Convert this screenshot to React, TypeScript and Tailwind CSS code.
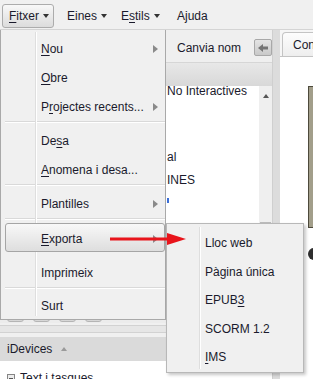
import React from 'react'

const Key = ({ children }: { children: React.ReactNode }) => (
  <span className="underline underline-offset-[2px]">{children}</span>
)

const Caret = () => (
  <span className="ml-[4px] inline-block h-0 w-0 border-x-[3.5px] border-t-[4px] border-x-transparent border-t-[#333]" />
)

const SubArrow = () => (
  <span className="ml-auto inline-block h-0 w-0 border-y-[4.5px] border-l-[5px] border-y-transparent border-l-[#8a8a8a]" />
)

const Sep = () => (
  <div className="ml-[4px] h-[5px] border-t border-[#d9d9d9]">
    <div className="h-px bg-white" />
  </div>
)

function Item({ children, sub, h = 'h-[29px]' }: { children: React.ReactNode; sub?: boolean; h?: string }) {
  return (
    <div className={`flex ${h} items-center pl-[40px] pr-[7px]`}>
      <span>{children}</span>
      {sub && <SubArrow />}
    </div>
  )
}

function FileMenu() {
  return (
    <div className="absolute left-0 top-[30px] h-[290px] w-[166px] border-x border-b border-[#a9a9a9] bg-[#f0f0f0] pt-[4px]">
      <div className="absolute bottom-[3px] left-[34px] top-[2px] w-[2px] border-l border-[#dedede] bg-white" />
      <Item sub>
        <Key>N</Key>ou
      </Item>
      <Item>
        <Key>O</Key>bre
      </Item>
      <Item sub>
        P<Key>r</Key>ojectes recents...
      </Item>
      <Sep />
      <Item>
        De<Key>s</Key>a
      </Item>
      <Item>
        <Key>A</Key>nomena i desa...
      </Item>
      <Sep />
      <Item sub>Plantilles</Item>
      <Sep />
      <div className="relative mb-[6px] ml-[4px] flex h-[29px] items-center rounded-[3px] border border-[#a5a5a5] bg-gradient-to-b from-[#f8f8f8] to-[#dedede] pl-[35px] pr-[6px] pt-[3px]">
        <span>
          <Key>E</Key>xporta
        </span>
        <SubArrow />
      </div>
      <Item>Imprimeix</Item>
      <Sep />
      <Item h="h-[27px]">Surt</Item>
    </div>
  )
}

function ExportMenu() {
  const rows: React.ReactNode[] = [
    'Lloc web',
    'Pàgina única',
    <>
      EPUB<Key>3</Key>
    </>,
    'SCORM 1.2',
    <>
      <Key>I</Key>MS
    </>
  ]
  return (
    <div className="absolute left-[166px] top-[223px] w-[138px] border border-[#b8b8b8] bg-[#f0f0f0] pt-[5px] shadow-[2px_2px_3px_rgba(0,0,0,0.22)]">
      <div className="absolute bottom-[3px] left-[32px] top-[3px] w-[2px] border-l border-[#dedede] bg-white" />
      {rows.map((r, i) => (
        <div key={i} className="flex h-[28.5px] items-center pl-[38px]">
          {r}
        </div>
      ))}
    </div>
  )
}

export default function App() {
  return (
    <div className="relative h-[379px] w-[313px] overflow-hidden bg-[#f0f0f0] font-['Liberation_Sans',Arial,sans-serif] text-[12px] leading-[14px] text-[#1a1a2c]">
      {/* menu bar */}
      <div className="flex h-[30px] items-start border-b border-[#d4d4d4] pl-[2px] pt-[4px]">
        <div className="flex h-[24px] w-[52px] items-center rounded-[3px] border border-[#acacac] bg-gradient-to-b from-[#f8f8f8] to-[#dcdcdc] pl-[6px]">
          <Key>F</Key>itxer
          <Caret />
        </div>
        <div className="ml-[6px] flex h-[24px] w-[48px] items-center pl-[7px]">
          Eines
          <Caret />
        </div>
        <div className="ml-[6px] flex h-[24px] w-[50px] items-center pl-[7px]">
          E<Key>s</Key>tils
          <Caret />
        </div>
        <div className="ml-[6px] flex h-[24px] items-center pl-[7px]">Ajuda</div>
      </div>

      <div className="flex h-[349px]">
        {/* left panel */}
        <div className="flex w-[273px] flex-col border-r border-[#cfcfcf]">
          <div className="flex h-[32px] shrink-0 items-center justify-end bg-[#efefef] pt-[3px]">
            <span className="mr-[13px]">Canvia nom</span>
            <div className="flex h-[17px] w-[18px] items-center justify-center rounded-[2px] border border-[#a8a8a8] bg-gradient-to-b from-[#e4e4e4] to-[#c9c9c9]">
              <svg width="10" height="8" viewBox="0 0 10 8">
                <path d="M0 4 L5 0 L5 2.5 L10 2.5 L10 5.5 L5 5.5 L5 8 Z" fill="#747474" />
              </svg>
            </div>
          </div>
          <div className="h-[24px] shrink-0 border-t border-[#d6d6d6] bg-gradient-to-b from-[#e8e8e8] to-[#d8d8d8]" />
          <div className="flex h-[214px] shrink-0">
            <div className="flex-1 overflow-hidden whitespace-nowrap bg-white pl-[167px]">
              <div className="h-[10px] leading-[10px]">No Interactives</div>
              <div className="mt-[54px] h-[14px]">al</div>
              <div className="mt-[9px] h-[14px]">INES</div>
              <div className="mt-[11px] h-[5px] w-[2px] bg-[#3b6fd8]" />
            </div>
            <div className="flex w-[13px] flex-col items-center bg-[#efefef]">
              <span className="mt-[8px] h-0 w-0 border-x-[3px] border-b-[4px] border-x-transparent border-b-[#555]" />
              <div className="mt-[124px] h-[70px] w-[11px] border-t border-[#bdbdbd] bg-[#dcdcdc]" />
            </div>
          </div>
          <div className="flex h-[23px] shrink-0 gap-[9px] bg-[#ececec] pl-[7px] pt-[2px]">
            {[0, 1, 2, 3].map((i) => (
              <div key={i} className="h-[20px] w-[17px] rounded-[3px] border border-[#b5b5b5] bg-gradient-to-b from-[#f4f4f4] to-[#d6d6d6]" />
            ))}
          </div>
          <div className="h-[14px] shrink-0 bg-[#f0f0f0] pt-[2px]">
            <div className="h-[8px] border-y border-[#d2d2d2] bg-[#e6e6e6]" />
          </div>
          <div className="flex h-[24px] shrink-0 items-center bg-[#dadada] pl-[7px]">
            iDevices
            <span className="ml-[9px] h-0 w-0 border-x-[3.5px] border-b-[4px] border-x-transparent border-b-[#9a9a9a]" />
          </div>
          <div className="min-h-0 flex-1 overflow-hidden bg-white pl-[7px] pt-[10px]">
            <div className="flex items-center gap-[5px]">
              <span className="flex h-[8px] w-[8px] items-center justify-center border border-[#858585] bg-[#ececec]">
                <span className="h-px w-[4px] bg-[#555]" />
              </span>
              Text i tasques
            </div>
          </div>
        </div>
        <div className="w-[7px] bg-[#dcdcdc]" />

        {/* content area */}
        <div className="flex flex-1 flex-col overflow-hidden bg-[#f6f6f6] pt-[2px]">
          <div className="ml-[2px] flex h-[24px] w-[120px] shrink-0 items-center whitespace-nowrap rounded-tl-[4px] border border-b-0 border-[#c4c4c4] bg-gradient-to-b from-[#fdfdfd] to-[#eeeeee] pl-[10px]">
            Contingut
          </div>
          <div className="flex-1 border-t border-[#c4c4c4] bg-white pl-[28px] pt-[29px]">
            <div className="h-[142px] w-[60px] border border-[#4d4a3c] bg-[#a29e8a]" />
            <div className="mt-[20px] h-[12px] w-[12px] rounded-full bg-[#2e2e2e]" />
          </div>
        </div>
      </div>

      <FileMenu />
      <ExportMenu />

      {/* annotation arrow */}
      <svg className="absolute left-[108px] top-[231px]" width="80" height="16" viewBox="0 0 80 16">
        <line x1="2" y1="8" x2="62" y2="8" stroke="#e8141b" strokeWidth="3" />
        <polygon points="59,2 78,8 59,14" fill="#e8141b" />
      </svg>
    </div>
  )
}
